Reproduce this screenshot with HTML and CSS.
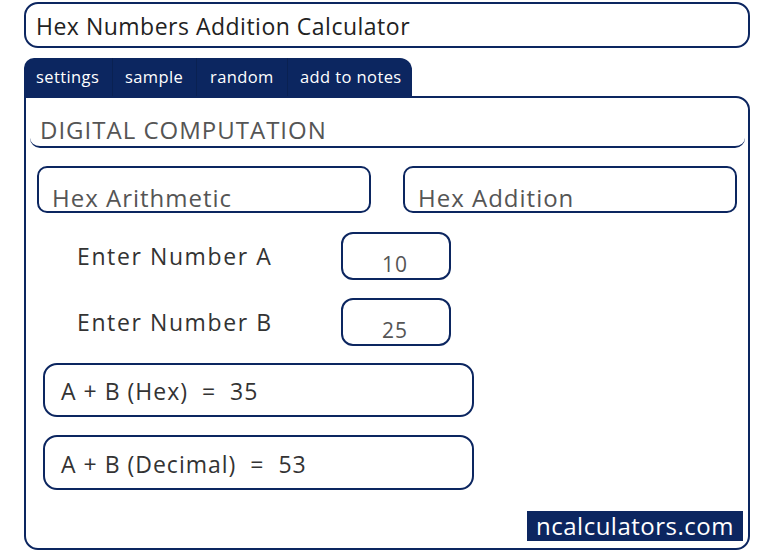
FILE: index.html
```html
<!DOCTYPE html>
<html>
<head>
<meta charset="utf-8">
<link rel="stylesheet" href="styles.css">
</head>
<body>
<div class="page">
  <div class="title">Hex Numbers Addition Calculator</div>
  <div class="tabs">
    <span class="tab t1">settings</span>
    <span class="tab t2">sample</span>
    <span class="tab t3">random</span>
    <span class="tab t4">add to notes</span>
  </div>
  <div class="panel">
    <div class="heading">DIGITAL COMPUTATION</div>
    <div class="cats">
      <div class="cat">Hex Arithmetic</div>
      <div class="cat">Hex Addition</div>
    </div>
    <div class="row ra">
      <span class="label">Enter Number A</span>
      <span class="input">10</span>
    </div>
    <div class="row rb">
      <span class="label">Enter Number B</span>
      <span class="input">25</span>
    </div>
    <div class="result r1">A + B (Hex)&nbsp; = &nbsp;35</div>
    <div class="result r2">A + B (Decimal)&nbsp; = &nbsp;53</div>
    <div class="brand">ncalculators.com</div>
  </div>
</div>
</body>
</html>
```

FILE: styles.css
```css
* { box-sizing: border-box; }
html, body { margin: 0; padding: 0; background: #fff; }
body { font-family: "Open Sans", "Liberation Sans", sans-serif; color: #333; }
.page { width: 770px; height: 551px; padding: 2px 0 0 24px; }

.title {
  width: 726px; height: 46px;
  border: 2px solid #0c2660; border-radius: 14px;
  padding: 2px 0 0 10px;
  font-size: 23px; letter-spacing: 0.5px; color: #222;
  display: flex; align-items: center;
}

.tabs {
  margin-top: 10px;
  width: 388px; height: 38px;
  background: #0c2660;
  border-radius: 10px 12px 0 0;
  display: flex; align-items: center;
  color: #fff; font-size: 16.5px; letter-spacing: 0.4px;
}
.tab { height: 38px; display: flex; align-items: center; border-right: 1px solid #0a2152; padding-bottom: 2px; }
.t1 { padding-left: 12px; width: 89px; }
.t2 { padding-left: 12px; width: 84px; }
.t3 { padding-left: 13px; width: 91px; }
.t4 { padding-left: 12px; border-right: none; }

.panel {
  width: 726px; height: 454px;
  border: 2px solid #0c2660;
  border-radius: 0 14px 14px 14px;
  display: flex; flex-direction: column;
}

.heading {
  margin: 0 3px 0 4px;
  height: 50px;
  border-bottom: 2px solid #0c2660;
  border-radius: 0 0 10px 10px;
  padding: 18px 0 0 10px;
  font-size: 24px; letter-spacing: 1px; color: #555; line-height: 28px;
}

.cats { display: flex; gap: 32px; margin: 18px 0 0 11px; }
.cat {
  width: 334px; height: 47px;
  border: 2px solid #0c2660; border-radius: 10px;
  padding: 15px 0 0 13px;
  font-size: 24px; letter-spacing: 1px; line-height: 30px; color: #555;
}

.row { display: flex; align-items: center; margin-left: 51px; }
.ra { margin-top: 19px; }
.rb { margin-top: 18px; }
.label { width: 264px; font-size: 23px; letter-spacing: 1.6px; color: #333; padding-bottom: 0; }
.input {
  width: 110px; height: 48px;
  border: 2px solid #0c2660; border-radius: 12px;
  display: flex; justify-content: center; align-items: flex-end;
  padding-bottom: 0; padding-right: 2px;
  font-size: 21px; letter-spacing: 1px; color: #555;
}

.result {
  margin-left: 17px;
  width: 431px;
  border: 2px solid #0c2660; border-radius: 14px;
  display: flex; align-items: center;
  padding: 2px 0 0 16px;
  font-size: 23px; letter-spacing: 1px; color: #333;
}
.r1 { margin-top: 17px; height: 54px; }
.r2 { margin-top: 18px; height: 55px; }

.brand {
  margin-top: auto;
  align-self: flex-end;
  margin-right: 5px; margin-bottom: 7px;
  width: 216px; height: 30px;
  background: #0c2660; color: #fff;
  font-size: 24px; letter-spacing: 0.5px; line-height: 30px;
  text-align: center;
}
```
